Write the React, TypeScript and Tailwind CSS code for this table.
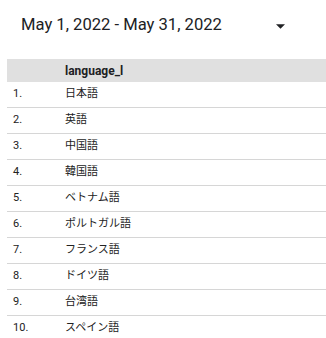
import React from 'react';

const languages = [
  '日本語',
  '英語',
  '中国語',
  '韓国語',
  'ベトナム語',
  'ポルトガル語',
  'フランス語',
  'ドイツ語',
  '台湾語',
  'スペイン語',
];

const font = { fontFamily: 'Roboto, "Noto Sans CJK JP", sans-serif' };

const App: React.FC = () => {
  return (
    <div className="w-[326px] h-[338px] overflow-hidden bg-white" style={font}>
      <div className="flex items-center justify-between h-[50px] pl-[21px] pr-[41px]">
        <span className="text-[16.6px] text-[#202124]">May 1, 2022 - May 31, 2022</span>
        <svg width="9" height="5" viewBox="0 0 10 5" className="mt-[2px]">
          <path d="M0 0h10L5 5z" fill="#202124" />
        </svg>
      </div>
      <div className="ml-[7px] mt-[9px]">
        <div className="flex items-center h-[23px] bg-[#e0e0e0] text-[12px] font-bold text-[#202124]">
          <span className="w-[58px]" />
          <span>language_l</span>
        </div>
        {languages.map((lang, i) => (
          <div
            key={lang}
            className="flex items-center h-[26px] border-b border-[#d6d6d6] text-[11px] text-[#222]"
          >
            <span className="w-[58px] pl-[6px]">{i + 1}.</span>
            <span>{lang}</span>
          </div>
        ))}
      </div>
    </div>
  );
};

export default App;
